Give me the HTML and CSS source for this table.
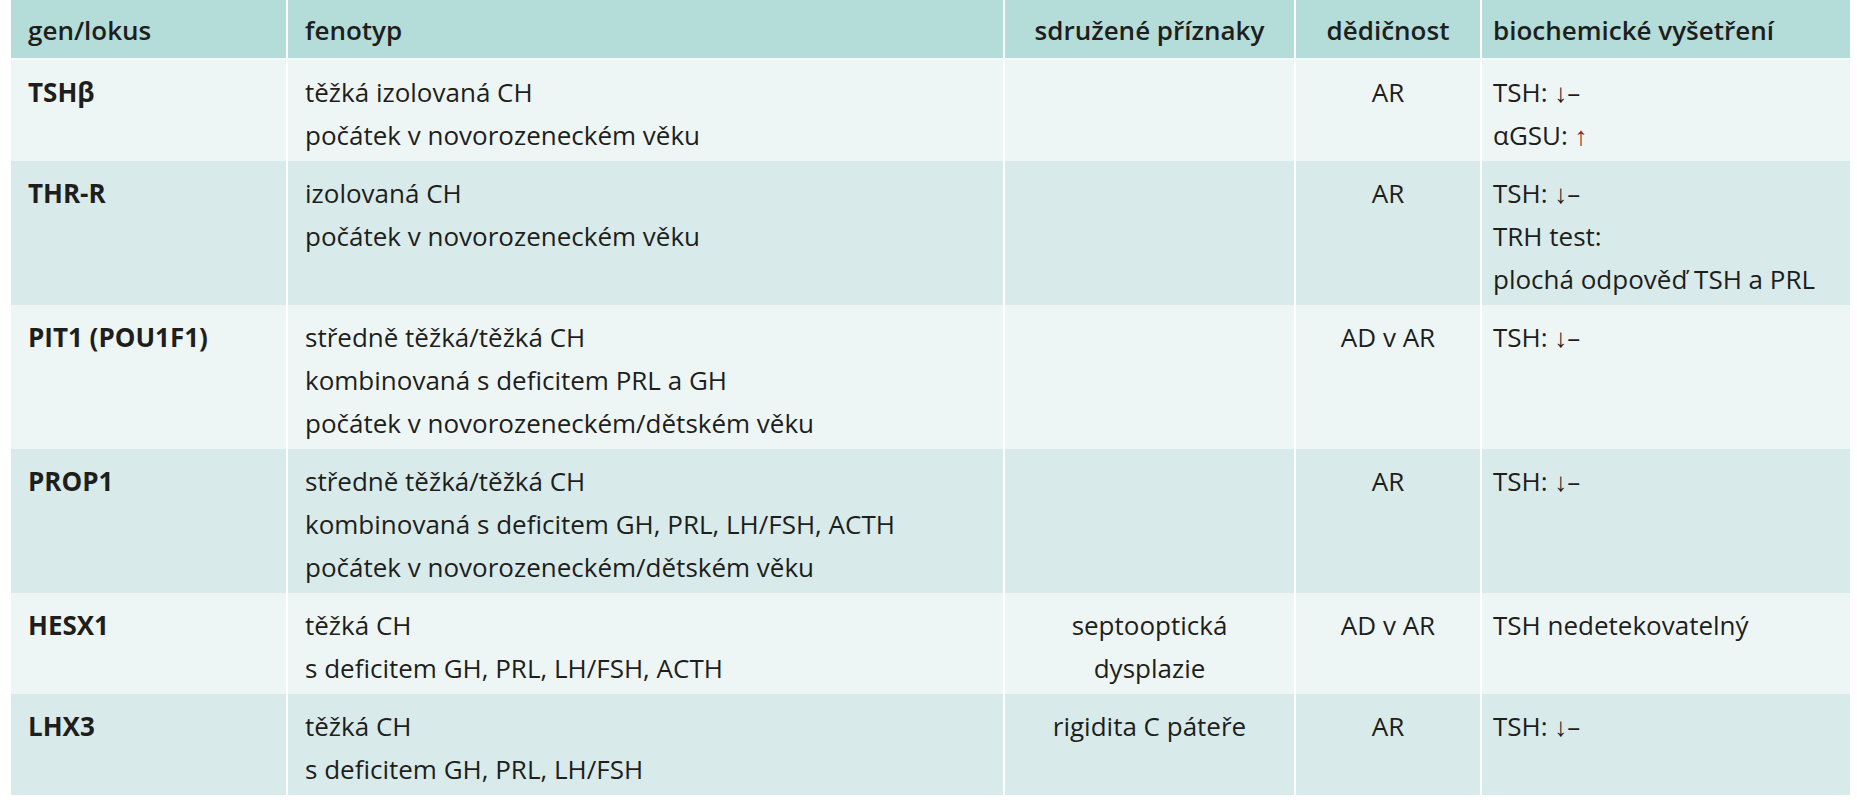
FILE: index.html
```html
<!DOCTYPE html>
<html lang="cs">
<head>
<meta charset="utf-8">
<title>Tabulka</title>
<link rel="stylesheet" href="styles.css">
</head>
<body>
<table class="gt">
  <colgroup>
    <col class="c1"><col class="c2"><col class="c3"><col class="c4"><col class="c5">
  </colgroup>
  <thead>
    <tr>
      <th class="left">gen/lokus</th>
      <th class="left">fenotyp</th>
      <th class="center">sdružené příznaky</th>
      <th class="center">dědičnost</th>
      <th class="left bio">biochemické vyšetření</th>
    </tr>
  </thead>
  <tbody>
    <tr class="light">
      <td class="gene">TSHβ</td>
      <td>těžká izolovaná CH<br>počátek v novorozeneckém věku</td>
      <td class="center"></td>
      <td class="center">AR</td>
      <td class="bio">TSH: ↓–<br>αGSU: <span class="up">↑</span></td>
    </tr>
    <tr class="mid">
      <td class="gene">THR-R</td>
      <td>izolovaná CH<br>počátek v novorozeneckém věku</td>
      <td class="center"></td>
      <td class="center">AR</td>
      <td class="bio">TSH: ↓–<br>TRH test:<br>plochá odpověď TSH a PRL</td>
    </tr>
    <tr class="light">
      <td class="gene">PIT1 (POU1F1)</td>
      <td>středně těžká/těžká CH<br>kombinovaná s deficitem PRL a GH<br>počátek v novorozeneckém/dětském věku</td>
      <td class="center"></td>
      <td class="center">AD v AR</td>
      <td class="bio">TSH: ↓–</td>
    </tr>
    <tr class="mid">
      <td class="gene">PROP1</td>
      <td>středně těžká/těžká CH<br>kombinovaná s deficitem GH, PRL, LH/FSH, ACTH<br>počátek v novorozeneckém/dětském věku</td>
      <td class="center"></td>
      <td class="center">AR</td>
      <td class="bio">TSH: ↓–</td>
    </tr>
    <tr class="light">
      <td class="gene">HESX1</td>
      <td>těžká CH<br>s deficitem GH, PRL, LH/FSH, ACTH</td>
      <td class="center">septooptická<br>dysplazie</td>
      <td class="center">AD v AR</td>
      <td class="bio">TSH nedetekovatelný</td>
    </tr>
    <tr class="mid">
      <td class="gene">LHX3</td>
      <td>těžká CH<br>s deficitem GH, PRL, LH/FSH</td>
      <td class="center">rigidita C páteře</td>
      <td class="center">AR</td>
      <td class="bio">TSH: ↓–</td>
    </tr>
  </tbody>
</table>
</body>
</html>
```
FILE: styles.css
```css
html, body {
  margin: 0;
  padding: 0;
  background: #ffffff;
}

body {
  font-family: "Open Sans", "Noto Sans", "Liberation Sans", sans-serif;
  color: #1e1e1c;
}

.gt {
  margin-left: 11px;
  width: 1839px;
  table-layout: fixed;
  border-collapse: collapse;
  border-spacing: 0;
  font-size: 26px;
  line-height: 43px;
}

.c1 { width: 276px; }
.c2 { width: 717px; }
.c3 { width: 291px; }
.c4 { width: 186px; }
.c5 { width: 369px; }

.gt th,
.gt td {
  padding: 11px 8px 4px 17px;
  vertical-align: top;
  text-align: left;
  border-left: 2px solid #ffffff;
  white-space: nowrap;
}

.gt th:first-child,
.gt td:first-child {
  border-left: none;
}

.gt thead th {
  background: #b4dcd8;
  font-weight: 600;
  padding-top: 9px;
  padding-bottom: 6px;
  border-bottom: 2px solid #f4faf9;
}

.gt .center {
  text-align: center;
  padding-left: 6px;
  padding-right: 6px;
}

.gt .bio {
  padding-left: 11px;
}

.gt .gene {
  font-weight: 700;
}

.light td { background: #eef6f5; }
.mid td { background: #d8ebea; }

.up { color: #8a2b2e; }
```
